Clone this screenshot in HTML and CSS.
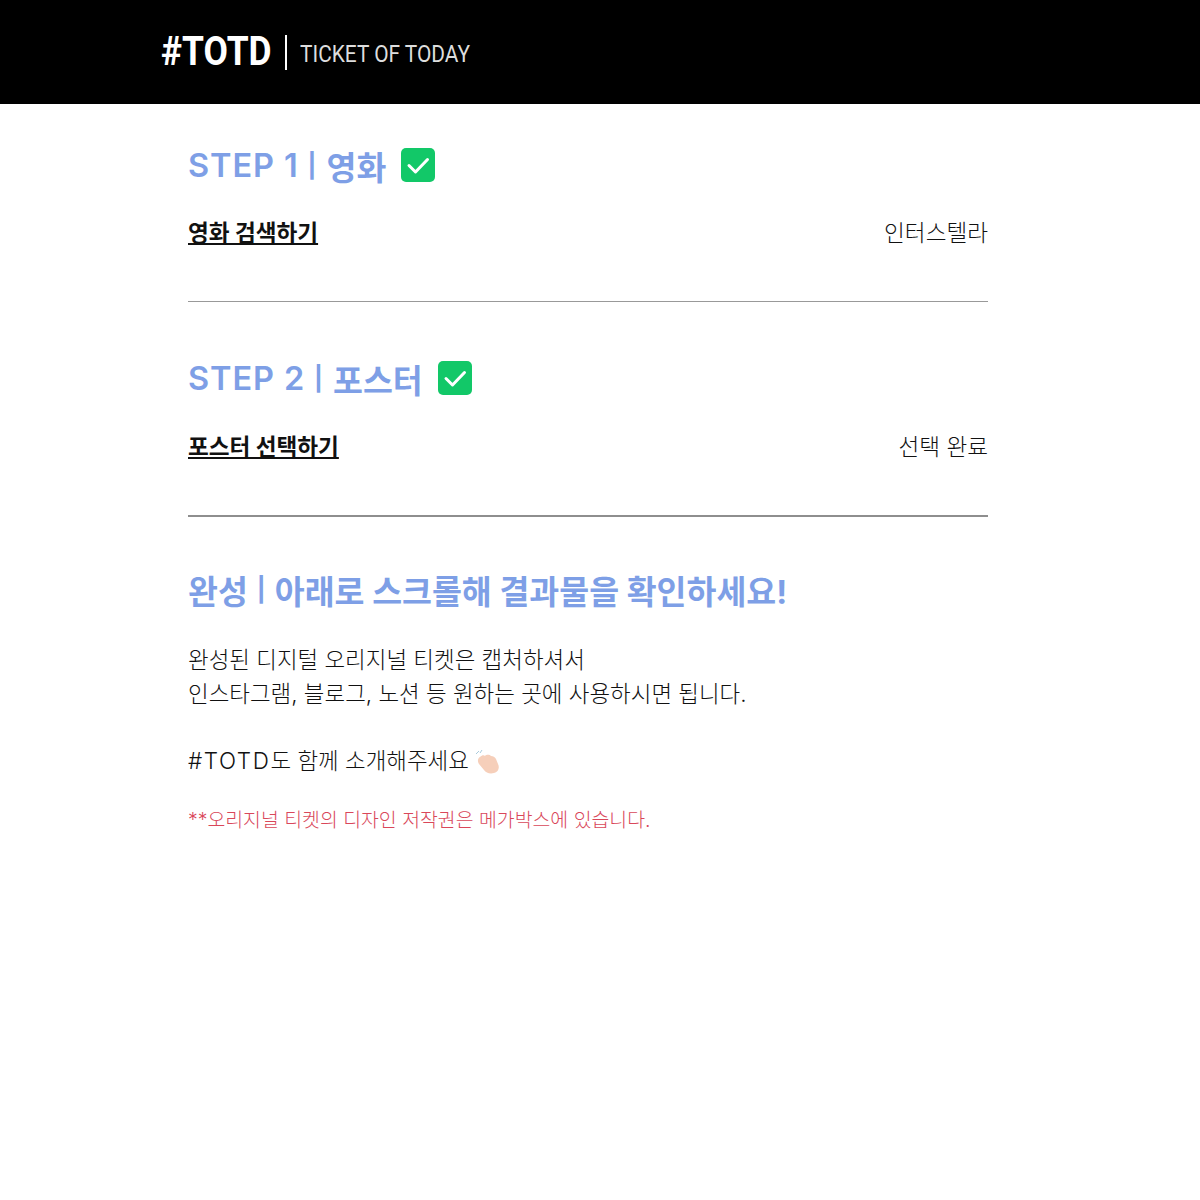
FILE: index.html
```html
<!DOCTYPE html>
<html lang="ko">
<head>
<meta charset="utf-8">
<title>TOTD</title>
<link rel="stylesheet" href="styles.css">
</head>
<body>
<header class="top">
  <div class="brand">
    <span class="logo">#TOTD</span>
    <span class="bar"></span>
    <span class="tag">TICKET OF TODAY</span>
  </div>
</header>
<main class="wrap">
  <section class="step">
    <h2 class="title"><span class="num">STEP 1</span><span class="pipe">|</span><span class="name">영화</span><svg class="check" viewBox="0 0 34 34"><rect width="34" height="34" rx="5" fill="#12c868"/><path d="M8 17.5l6.5 6.5L26.5 11.5" fill="none" stroke="#fff" stroke-width="3" stroke-linecap="round" stroke-linejoin="round"/></svg></h2>
    <div class="row"><a class="link">영화 검색하기</a><span class="val">인터스텔라</span></div>
  </section>
  <hr class="rule">
  <section class="step">
    <h2 class="title"><span class="num">STEP 2</span><span class="pipe">|</span><span class="name">포스터</span><svg class="check" viewBox="0 0 34 34"><rect width="34" height="34" rx="5" fill="#12c868"/><path d="M8 17.5l6.5 6.5L26.5 11.5" fill="none" stroke="#fff" stroke-width="3" stroke-linecap="round" stroke-linejoin="round"/></svg></h2>
    <div class="row"><a class="link">포스터 선택하기</a><span class="val">선택 완료</span></div>
  </section>
  <hr class="rule thick">
  <section class="done">
    <h2 class="title bold"><span class="name">완성</span><span class="pipe">|</span><span class="name">아래로 스크롤해 결과물을 확인하세요!</span></h2>
    <p class="text">완성된 디지털 오리지널 티켓은 캡처하셔서<br>인스타그램, 블로그, 노션 등 원하는 곳에 사용하시면 됩니다.</p>
    <p class="text share"><span class="latin">#TOTD</span>도 함께 소개해주세요<svg class="clap" viewBox="0 0 26 26"><path d="M2 6l3-3M6 5l2-3" fill="none" stroke="#a9cbdc" stroke-width="1"/><path d="M6 9c2-2 4-2 5-1 2-2 5-1 6 0 2 0 4 1 5 3l2 5c2 4 0 8-4 9-4 1-8 0-10-3l-5-6c-2-3-1-6 1-7z" fill="#f6cfba"/></svg></p>
    <p class="note">**오리지널 티켓의 디자인 저작권은 메가박스에 있습니다.</p>
  </section>
</main>
</body>
</html>
```
FILE: styles.css
```css
* { box-sizing: border-box; }
body { margin: 0; background: #fff; color: #111; font-family: "Inter", "Noto Sans CJK KR", sans-serif; }
.top { height: 104px; background: #000; padding: 33px 0 0 161px; }
.brand { display: flex; align-items: center; height: 38px; color: #fff; }
.logo { display: block; width: 111px; font: 700 40px/36px "Roboto", sans-serif; transform: scaleX(.885); transform-origin: left center; white-space: nowrap; }
.bar { width: 2px; height: 35px; margin: 0 13px 0 13px; background: #fff; }
.tag { display: block; width: 170px; padding-top: 3px; font: 400 24px/38px "Roboto", sans-serif; color: #ddd; transform: scaleX(.87); transform-origin: left center; white-space: nowrap; }
.wrap { width: 800px; margin-left: 188px; }
.step { height: 197px; padding-top: 40px; }
.title { display: flex; align-items: center; height: 42px; margin: 0; font-size: 32.5px; font-weight: 600; color: #7e9fe6; }
.num { letter-spacing: .9px; }
.pipe { margin: 0 10px 0 9px; font-size: 24px; font-weight: 700; }
.check { width: 34px; height: 34px; margin-left: 15px; }
.row { display: flex; justify-content: space-between; align-items: center; margin-top: 32px; font-size: 22.6px; line-height: 30px; }
.link { font-weight: 700; text-decoration: underline; color: #111; }
.val { font-weight: 300; color: #111; }
.rule { height: 1px; margin: 0; border: 0; background: #999; }
.rule.thick { height: 2px; background: #8e8e8e; }
.step + .rule + .step { height: 198px; margin-top: 15px; }
.step + .rule + .step .row { margin-top: 33px; }
.done { padding-top: 51px; }
.title.bold { font-weight: 700; }
.title.bold .pipe { margin: 0 9px; }
.text { margin: 33px 0 0; font-size: 22.45px; font-weight: 300; line-height: 34px; color: #111; }
.share { display: flex; align-items: center; margin-top: 33px; }
.latin { letter-spacing: 1.6px; }
.clap { width: 26px; height: 26px; margin-left: 5px; }
.note { margin: 29px 0 0; font-size: 19.4px; font-weight: 300; line-height: 26px; color: #d9475a; }
```
